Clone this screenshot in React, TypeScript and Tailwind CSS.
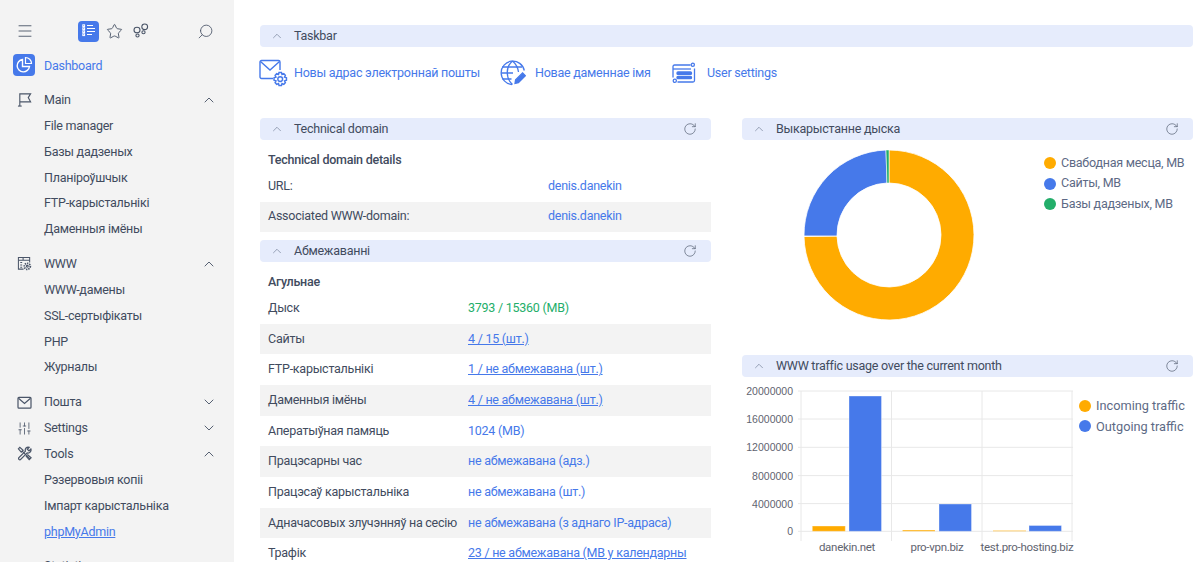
import { ChevronDown, ChevronUp, Menu, RotateCw, Search, SlidersVertical, Star } from "lucide-react";
import { ReactNode } from "react";

const BLUE = "#4679ea";

const ListIcon = () => (
  <svg width="16" height="16" viewBox="0 0 16 16" fill="none" stroke="#fff" strokeWidth="1">
    <path d="M6 2.500h6M6 5.500h8M6 8.500h8M6 11.500h5" />
    <rect x="1.800" y="1.800" width="1.800" height="1.800" />
    <rect x="1.800" y="4.800" width="1.800" height="1.800" />
    <rect x="1.800" y="7.800" width="1.800" height="1.800" />
    <rect x="1.800" y="10.800" width="1.800" height="1.800" />
  </svg>
);

const FootprintsIcon = () => (
  <svg width="16" height="16" viewBox="0 0 16 16" fill="none" stroke="#4a5568" strokeWidth="1.100">
    <ellipse cx="4" cy="7" rx="3" ry="2.800" />
    <ellipse cx="4.500" cy="12.500" rx="1.600" ry="1.500" />
    <ellipse cx="11.700" cy="3.800" rx="2.900" ry="2.800" />
    <ellipse cx="10.500" cy="9.300" rx="1.600" ry="1.500" />
  </svg>
);

const PieIcon = () => (
  <svg width="18" height="18" viewBox="0 0 18 18" fill="none" stroke="#fff" strokeWidth="1.400">
    <path d="M7.500 3.500a6.200 6.200 0 1 0 7 7h-7z" />
    <path d="M10.500 1.500a6 6 0 0 1 6 6h-6z" strokeWidth="1.200" />
  </svg>
);

const FlagIcon = () => (
  <svg width="15" height="15" viewBox="0 0 16 16" fill="none" stroke="#4a5568" strokeWidth="1.200">
    <path d="M3 15V2h11.500L12 6l2.500 4.500H3" />
    <path d="M1 15h4" />
  </svg>
);

const WwwIcon = () => (
  <svg width="15" height="15" viewBox="0 0 16 16" fill="none" stroke="#4a5568" strokeWidth="1.100">
    <path d="M7 14H1.500V1.500h12V7" />
    <path d="M1.500 4.500h12M3.500 7h2M3.500 9.500h2M3.500 12h2M6.500 1.500v3" />
    <circle cx="11" cy="11" r="3.200" strokeWidth="1.900" strokeDasharray="1.400 1" />
    <circle cx="11" cy="11" r="1" />
  </svg>
);

const MailIcon = () => (
  <svg width="15" height="13" viewBox="0 0 16 14" fill="none" stroke="#4a5568" strokeWidth="1.300">
    <rect x="1" y="1.500" width="14" height="11.500" rx="1" />
    <path d="M1.500 2.500 8 8l6.500-5.500" />
  </svg>
);

const ToolsIcon = () => (
  <svg width="15" height="15" viewBox="0 0 16 16" fill="none" stroke="#4a5568" strokeWidth="1.300">
    <path d="M1.500 3 3 1.500 6.500 4.500 4.500 6.500zM5.500 5.500l8.500 8.500" />
    <path d="M14.800 3.200 12.800 5.200 11 3.500 13 1.300A3.200 3.200 0 0 0 9 5.500L1.800 12.700a1.500 1.500 0 0 0 1.800 2l7.200-7.400a3.200 3.200 0 0 0 4-4.100z" />
    <path d="M9.500 10.500l3.500 4 2-2-4-3.500" />
  </svg>
);

const MailGearIcon = () => (
  <svg width="29" height="28" viewBox="0 0 29 28" fill="none" stroke={BLUE} strokeWidth="1.400">
    <path d="M14 19.500H2.500a1.500 1.500 0 0 1-1.500-1.500V3a1.500 1.500 0 0 1 1.500-1.500h17A1.500 1.500 0 0 1 21 3v8" />
    <path d="M1.500 2.500 11 11l9.500-8.500" />
    <path d="M20 13.500h2.500l.5 2 1.800-.8 1.600 1.700-.9 1.700 2 .7v2.400l-2 .7.9 1.700-1.600 1.700-1.800-.8-.5 2H20l-.5-2-1.800.8-1.600-1.700.9-1.700-2-.7v-2.400l2-.7-.9-1.700 1.600-1.700 1.800.8z" />
    <circle cx="21.200" cy="20.100" r="2.400" />
  </svg>
);

const GlobeEditIcon = () => (
  <svg width="26" height="26" viewBox="0 0 26 26" fill="none" stroke={BLUE} strokeWidth="1.300">
    <path d="M12 24.500a11.700 11.700 0 1 1 12.300-14" />
    <path d="M2 7h20M1 13h12M2.500 19h9" />
    <path d="M12.500 1c-7 6-7 17 0 23.500M12.500 1c3.500 3 5.500 7.500 6 11" />
    <path d="M15 23.500l.6-3.600 7-7 2.800 2.800-7 7z" fill={BLUE} />
  </svg>
);

const SettingsWindowIcon = () => (
  <svg width="24" height="22" viewBox="0 0 24 22" fill="none" stroke={BLUE} strokeWidth="1.300">
    <path d="M18.500 3H2.500A1.500 1.500 0 0 0 1 4.500v11" />
    <path d="M1 7h18" />
    <path d="M22.500 6.500v12a1.500 1.500 0 0 1-1.500 1.500H5.500" />
    <circle cx="20.800" cy="2.800" r="1.600" />
    <circle cx="2.800" cy="18.800" r="1.600" />
    <rect x="5" y="10" width="14.500" height="2.400" rx="1" fill={BLUE} />
    <rect x="5" y="14.300" width="14.500" height="2.400" rx="1" fill={BLUE} />
  </svg>
);

const SubItem = ({ label, active }: { label: string; active?: boolean }) => (
  <div className={`flex h-[25.85px] items-center pl-[44px] pt-[1px] text-[12.5px] ${active ? "text-[#4679ea] underline" : "text-[#414b5e]"}`}>
    {label}
  </div>
);

interface SectionProps {
  icon: ReactNode;
  label: string;
  open?: boolean;
  items?: string[];
}

const Section = ({ icon, label, open, items }: SectionProps) => (
  <div className={open ? "mb-[9px]" : ""}>
    <div className="flex h-[25.85px] items-center text-[12.5px] text-[#414b5e]">
      <div className="flex w-[44px] pl-[17px]">{icon}</div>
      <span className="flex-1">{label}</span>
      <div className="pr-[17px] text-[#4a5568]">
        {open ? <ChevronUp size={16} strokeWidth={1.400} /> : <ChevronDown size={16} strokeWidth={1.400} />}
      </div>
    </div>
    {items?.map((item) => (
      <SubItem key={item} label={item} active={item === "phpMyAdmin"} />
    ))}
  </div>
);

const Sidebar = () => (
  <aside className="h-[562px] w-[234px] shrink-0 overflow-hidden bg-[#f3f3f3]">
    <div className="flex h-[52px] items-center pb-[1px] pl-[16px] pr-[20px] pt-[11px] text-[#4a5568]">
      <Menu size={18} strokeWidth={1.200} />
      <div className="ml-[44px] flex h-[21px] w-[21px] items-center justify-center rounded-[4px] bg-[#4679ea]">
        <ListIcon />
      </div>
      <Star size={17} strokeWidth={1.300} className="ml-[7px]" />
      <div className="ml-[10px]"><FootprintsIcon /></div>
      <Search size={17} strokeWidth={1.200} className="ml-auto -scale-x-100" />
    </div>
    <div className="mb-[9px] flex h-[26px] items-center pl-[13px] text-[12.5px] text-[#4679ea]">
      <div className="mr-[9px] flex h-[22px] w-[22px] items-center justify-center rounded-[4px] bg-[#4679ea]">
        <PieIcon />
      </div>
      <span className="pt-[2px]">Dashboard</span>
    </div>
    <Section
      icon={<FlagIcon />}
      label="Main"
      open
      items={["File manager", "Базы дадзеных", "Планіроўшчык", "FTP-карыстальнікі", "Даменныя імёны"]}
    />
    <Section
      icon={<WwwIcon />}
      label="WWW"
      open
      items={["WWW-дамены", "SSL-сертыфікаты", "PHP", "Журналы"]}
    />
    <Section icon={<MailIcon />} label="Пошта" />
    <Section icon={<SlidersVertical size={15} strokeWidth={1.300} color="#4a5568" />} label="Settings" />
    <Section
      icon={<ToolsIcon />}
      label="Tools"
      open
      items={["Рэзервовыя копіі", "Імпарт карыстальніка", "phpMyAdmin"]}
    />
    <Section icon={<div className="h-4 w-4" />} label="Statistics" />
  </aside>
);

const PanelBar = ({ title, refresh = true }: { title: string; refresh?: boolean }) => (
  <div className="flex h-[22px] items-center rounded-[4px] bg-[#e6ecfc] pr-[14px] text-[12.5px] text-[#414b5e]">
    <ChevronUp size={14} strokeWidth={1} className="ml-[10px] mr-[10px] text-[#5d6a85]" />
    <span className="flex-1">{title}</span>
    {refresh && <RotateCw size={14} strokeWidth={1.100} className="text-[#4a5568]" />}
  </div>
);

interface RowProps {
  label: string;
  value: string;
  grey?: boolean;
  link?: boolean;
  green?: boolean;
}

const Row = ({ label, value, grey, link, green }: RowProps) => (
  <div className={`flex h-[30.67px] items-center pl-[8px] text-[12.5px] text-[#414b5e] ${grey ? "bg-[#f3f3f3]" : ""}`}>
    <span className="w-[200px] shrink-0 whitespace-nowrap">{label}</span>
    <span className={`whitespace-nowrap ${green ? "text-[#23ae6a]" : "text-[#4679ea]"} ${link ? "underline" : ""}`}>
      {value}
    </span>
  </div>
);

const Donut = () => (
  <svg width="172" height="172" viewBox="-86 -86 172 172">
    <path d="M0 -85A85 85 0 1 1 -85 1.500L-52 1A52 52 0 1 0 0 -52Z" fill="#ffab00" stroke="#fff" strokeWidth="0.800" />
    <path d="M-85 1A85 85 0 0 1 -3 -85L-2 -52A52 52 0 0 0 -52 1Z" fill="#4679ea" stroke="#fff" strokeWidth="0.800" />
    <path d="M-3 -85L0 -85L0 -52L-2 -52Z" fill="#23ae6a" stroke="#fff" strokeWidth="0.500" />
  </svg>
);

const yTicks = [
  { label: "20000000", y: 14 },
  { label: "16000000", y: 42 },
  { label: "12000000", y: 70.300 },
  { label: "8000000", y: 98.600 },
  { label: "4000000", y: 126.600 },
  { label: "0", y: 154.300 },
];

const bars = [
  { x: 70.300, w: 33, top: 149, color: "#ffab00" },
  { x: 107, w: 32.500, top: 19, color: "#4679ea" },
  { x: 160.500, w: 32.500, top: 153, color: "#ffab00" },
  { x: 197, w: 32.500, top: 127, color: "#4679ea" },
  { x: 251, w: 33, top: 153.500, color: "#ffab00" },
  { x: 287, w: 32.500, top: 148.500, color: "#4679ea" },
];

const TrafficChart = () => (
  <svg width="337" height="179" viewBox="0 0 337 179" className="block shrink-0">
    {yTicks.map((t) => (
      <g key={t.label}>
        <line x1="56" x2="331" y1={t.y} y2={t.y} stroke="#e8e8e8" strokeWidth="1" />
        <text x="51" y={t.y + 4} textAnchor="end" fontSize="10.500" letterSpacing="0" fill="#5f6470" fontFamily="Liberation Sans, sans-serif">
          {t.label}
        </text>
      </g>
    ))}
    {[59, 149.500, 240, 330].map((x) => (
      <line key={x} x1={x} x2={x} y1="14" y2="164" stroke="#e8e8e8" strokeWidth="1" />
    ))}
    {bars.map((b) => (
      <rect key={b.x} x={b.x} y={b.top} width={b.w} height={154.300 - b.top} fill={b.color} stroke="#fff" strokeOpacity="0.350" />
    ))}
    {[
      { label: "danekin.net", x: 105 },
      { label: "pro-vpn.biz", x: 195 },
      { label: "test.pro-hosting.biz", x: 285 },
    ].map((l) => (
      <text key={l.label} x={l.x} y="174" textAnchor="middle" fontSize="11.500" letterSpacing="-0.300" fill="#5f6470" fontFamily="Roboto, sans-serif">
        {l.label}
      </text>
    ))}
  </svg>
);

const Legend = ({ items, className }: { items: [string, string][]; className: string }) => (
  <div className={`flex flex-col whitespace-nowrap text-[#5d6a85] ${className}`}>
    {items.map(([label, color]) => (
      <div key={label} className="flex h-[20.500px] items-center">
        <span className="mr-[5px] h-[12px] w-[12px] rounded-full" style={{ backgroundColor: color }} />
        {label}
      </div>
    ))}
  </div>
);

const App = () => (
  <div
    className="flex h-[562px] w-[1200px] overflow-hidden bg-white tracking-[-0.25px]"
    style={{ fontFamily: 'Roboto, "Noto Sans", sans-serif' }}
  >
    <Sidebar />
    <main className="flex-1 pl-[26px] pr-[7px] pt-[25px]">
      <PanelBar title="Taskbar" refresh={false} />
      <div className="flex h-[52px] items-center text-[12.5px] text-[#4679ea]">
        <div className="-ml-[1px]"><MailGearIcon /></div>
        <span className="ml-[6px] w-[185px] whitespace-nowrap">Новы адрас электроннай пошты</span>
        <div className="ml-[21px]"><GlobeEditIcon /></div>
        <span className="ml-[9px] w-[116px] whitespace-nowrap">Новае даменнае імя</span>
        <div className="ml-[21px]"><SettingsWindowIcon /></div>
        <span className="ml-[11px]">User settings</span>
      </div>
      <div className="mt-[19px] grid grid-cols-[451px_451px] gap-x-[31px]">
        <div>
          <PanelBar title="Technical domain" />
          <div className="flex h-[31px] items-center pl-[8px] pt-[10px] text-[12.5px] font-medium text-[#414b5e]">
            Technical domain details
          </div>
          <div className="flex h-[30.500px] items-center pl-[8px] text-[12.5px] text-[#414b5e]">
            <span className="w-[280px]">URL:</span>
            <span className="text-[#4679ea]">denis.danekin</span>
          </div>
          <div className="flex h-[30.500px] items-center bg-[#f3f3f3] pl-[8px] text-[12.5px] text-[#414b5e]">
            <span className="w-[280px]">Associated WWW-domain:</span>
            <span className="text-[#4679ea]">denis.danekin</span>
          </div>
          <div className="mt-[8px]">
            <PanelBar title="Абмежаванні" />
          </div>
          <div className="flex h-[31px] items-center pl-[8px] pt-[10px] text-[12.5px] font-medium text-[#414b5e]">
            Агульнае
          </div>
          <Row label="Дыск" value="3793 / 15360 (MB)" green />
          <Row label="Сайты" value="4 / 15 (шт.)" grey link />
          <Row label="FTP-карыстальнікі" value="1 / не абмежавана (шт.)" link />
          <Row label="Даменныя імёны" value="4 / не абмежавана (шт.)" grey link />
          <Row label="Аператыўная памяць" value="1024 (MB)" />
          <Row label="Працэсарны час" value="не абмежавана (адз.)" grey />
          <Row label="Працэсаў карыстальніка" value="не абмежавана (шт.)" />
          <Row label="Адначасовых злучэнняў на сесію" value="не абмежавана (з аднаго IP-адраса)" grey />
          <Row label="Трафік" value="23 / не абмежавана (MB у календарны" link />
        </div>
        <div>
          <PanelBar title="Выкарыстанне дыска" />
          <div className="flex h-[215px]">
            <div className="ml-[61px] mt-[9px]"><Donut /></div>
            <Legend
              className="ml-[69px] mt-[13px] text-[12.5px]"
              items={[
                ["Свабодная месца, MB", "#ffab00"],
                ["Сайты, MB", "#4679ea"],
                ["Базы дадзеных, MB", "#23ae6a"],
              ]}
            />
          </div>
          <PanelBar title="WWW traffic usage over the current month" />
          <div className="flex">
            <TrafficChart />
            <Legend
              className="mt-[18.5px] text-[12.75px] tracking-normal"
              items={[
                ["Incoming traffic", "#ffab00"],
                ["Outgoing traffic", "#4679ea"],
              ]}
            />
          </div>
        </div>
      </div>
    </main>
  </div>
);

export default App;
